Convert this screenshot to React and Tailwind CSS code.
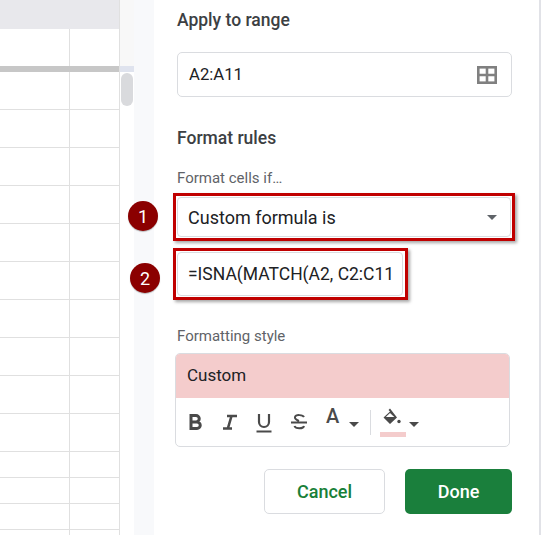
import React from "react";

const rows = [38, 38, 38, 38, 38, 38, 38, 38, 38, 38, 26, 26, 26, 6];

function Badge({ n }) {
  return (
    <div className="size-[30px] rounded-full bg-[#8b0000] text-white text-[18px] flex items-center justify-center shadow-[0_1px_1px_rgba(0,0,0,0.25)] shrink-0">
      {n}
    </div>
  );
}

export default function App() {
  return (
    <div className="w-[541px] h-[535px] overflow-hidden flex bg-white font-['Roboto',sans-serif]">
      <div className="w-[120px] shrink-0 flex flex-col border-r border-[#e0e0e0]">
        <div className="h-[29px] shrink-0 bg-[#e8e8ec]" />
        <div className="h-[37px] shrink-0 flex">
          <div className="w-[70px] border-r border-[#e0e0e0]" />
        </div>
        <div className="h-[6px] shrink-0 bg-[#c7c7c7]" />
        {rows.map((h, i) => (
          <div key={i} style={{ height: h }} className="shrink-0 flex border-b border-[#e0e0e0]">
            <div className="w-[70px] border-r border-[#e0e0e0]" />
          </div>
        ))}
      </div>
      <div className="w-[14px] shrink-0 flex flex-col">
        <div className="h-[66px] bg-[#f8f8f8]" />
        <div className="h-[6px] bg-[#dfe3ee]" />
        <div className="mt-px mx-px h-[33px] w-[12px] rounded-full bg-[#d9dadd]" />
      </div>
      <div className="w-[20px] shrink-0 bg-[#f8f9fb]" />
      <div className="flex-1 flex flex-col pl-[23px] relative border-r-2 border-[#e1e2e7]">
        <h2 className="mt-[10px] h-[20px] leading-[20px] text-[17.5px] font-medium text-[#3c4043]">Apply to range</h2>
        <div className="mt-[22px] w-[335px] h-[45px] flex items-center justify-between rounded-[5px] border border-[#dadce0] pl-[11px] pr-[14px] text-[16.7px] text-[#202124]">
          <span>A2:A11</span>
          <svg width="20" height="18" viewBox="0 0 20 18" fill="none" stroke="#808080" strokeWidth="2.6">
            <rect x="1.300" y="1.300" width="17.400" height="15.400" />
            <path d="M1 9h18M10 1v16" />
          </svg>
        </div>
        <h2 className="mt-[31px] h-[20px] leading-[20px] text-[17.5px] font-medium text-[#3c4043]">Format rules</h2>
        <div className="mt-[22px] h-[16px] leading-[16px] text-[15px] text-[#5f6368]">Format cells if…</div>
        <div className="absolute left-[-26px] top-[201px]"><Badge n="1" /></div>
        <div className="absolute left-[-24px] top-[263px]"><Badge n="2" /></div>
        <div className="mt-[7px] -ml-[4px] w-[342px] h-[48px] border-[3px] border-[#c00000] shadow-[2px_2px_3px_rgba(0,0,0,0.35)] p-px">
          <div className="h-full rounded-[4px] border border-[#dadce0] flex items-center justify-between pl-[10px] pr-[13px] text-[18px] text-[#202124]">
            <span>Custom formula is</span>
            <span className="w-0 h-0 border-x-[5.5px] border-x-transparent border-t-[5px] border-t-[#5f6368]" />
          </div>
        </div>
        <div className="mt-[7px] -ml-[4px] w-[235px] h-[52px] border-[3px] border-[#c00000] shadow-[2px_2px_3px_rgba(0,0,0,0.35)] pl-px pr-[2px] py-px">
          <div className="h-full rounded-[4px] border border-[#dadce0] flex items-center pl-[10px] text-[17.500px] text-[#202124] whitespace-nowrap overflow-hidden">
            =ISNA(MATCH(A2, C2:C11
          </div>
        </div>
        <div className="mt-[28px] h-[16px] leading-[16px] text-[15px] text-[#5f6368]">Formatting style</div>
        <div className="mt-[9px] -ml-[2px] w-[335px] h-[94px] rounded-[5px] border border-[#dadce0] overflow-hidden flex flex-col">
          <div className="h-[44px] shrink-0 bg-[#f4cccc] flex items-center pl-[11px] text-[17px] text-[#202124]">Custom</div>
          <div className="flex-1 flex items-center pl-[12px]">
            <svg width="15" height="16" viewBox="0 0 15 16" className="mr-[19px]"><path fill="none" stroke="#4a4a4a" strokeWidth="3" d="M3 1.500h5a3 3 0 0 1 0 6.500H3zM3 8h6a3.200 3.200 0 0 1 0 6.500H3z" /></svg>
            <svg width="16" height="16" viewBox="0 0 16 16" className="mr-[18px]"><path fill="none" stroke="#4a4a4a" strokeWidth="2.600" d="M5 2h10M9.500 2 6 14M1 14.500h9" /></svg>
            <svg width="16" height="20" viewBox="0 0 16 20" className="mr-[18px] mt-[2px]"><path fill="none" stroke="#4a4a4a" strokeWidth="2.200" d="M3 1v8a5 5 0 0 0 10 0V1M0.500 18.500h15" /></svg>
            <svg width="18" height="18" viewBox="0 0 18 18" className="mr-[18px]"><path fill="none" stroke="#4a4a4a" strokeWidth="2" d="M14 4c-1-2-8-3-9 0-.5 2 1.500 3 4 4M1 9.500h16M4.500 13c1 3 9 3 9.500 0" /></svg>
            <div className="relative w-[34px] h-[30px]">
              <span className="absolute left-0 top-[-1px] text-[20px] font-medium leading-[20px] text-[#4a4a4a]">A</span>
              <span className="absolute left-[23px] top-[15px] w-0 h-0 border-x-[5px] border-x-transparent border-t-[5px] border-t-[#4a4a4a]" />
            </div>
            <div className="w-px h-[25px] bg-[#dadce0] ml-[10px] mr-[9px]" />
            <div className="relative w-[38px] h-[32px] mt-[2px]">
              <svg width="20" height="18" viewBox="0 0 20 18" className="absolute left-[2px] top-px">
                <path fill="#4a4a4a" d="M8 0.500 6.500 2 8 3.500 1.500 9.500 8 16 15 9.500z" />
                <path fill="#ffffff" d="M3.800 9 8 5 12.300 9z" />
                <circle cx="17" cy="13.500" r="1.700" fill="#4a4a4a" />
              </svg>
              <span className="absolute left-0 top-[25px] w-[26px] h-[5px] bg-[#f4cccc]" />
              <span className="absolute left-[29px] top-[15px] w-0 h-0 border-x-[5px] border-x-transparent border-t-[5px] border-t-[#4a4a4a]" />
            </div>
          </div>
        </div>
        <div className="mt-[22px] -ml-[23px] flex justify-start pl-[110px] gap-[20px]">
          <button className="w-[121px] h-[45px] rounded-[5px] border border-[#dadce0] bg-white text-[18px] font-medium text-[#188038]">Cancel</button>
          <button className="w-[107px] h-[45px] rounded-[5px] bg-[#1a7f3c] text-[18px] font-medium text-white">Done</button>
        </div>
      </div>
    </div>
  );
}
